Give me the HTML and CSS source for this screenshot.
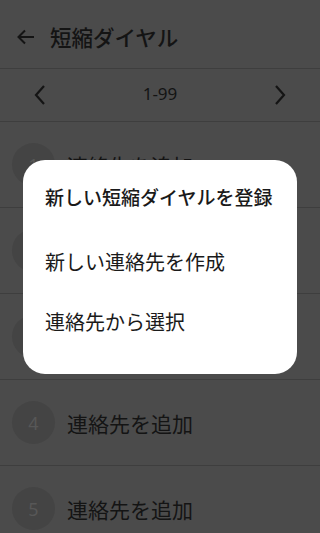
FILE: index.html
```html
<!DOCTYPE html>
<html lang="ja">
<head>
<meta charset="utf-8">
<link rel="stylesheet" href="styles.css">
</head>
<body>
<div class="app">
  <header class="header">
    <svg class="back" width="20" height="20" viewBox="0 0 20 20"><path d="M18 10H3M9 3.5L2.5 10L9 16.5" fill="none" stroke="#141414" stroke-width="2"/></svg>
    <h1 class="title">短縮ダイヤル</h1>
  </header>
  <div class="pager">
    <svg class="chev" width="16" height="24" viewBox="0 0 16 24"><path d="M12 3L4 12L12 21" fill="none" stroke="#141414" stroke-width="2.2"/></svg>
    <span class="range">1-99</span>
    <svg class="chev" width="16" height="24" viewBox="0 0 16 24"><path d="M4 3L12 12L4 21" fill="none" stroke="#141414" stroke-width="2.2"/></svg>
  </div>
  <ul class="list">
    <li class="row"><span class="num">1</span><span class="label">連絡先を追加</span></li>
    <li class="row"><span class="num">2</span><span class="label">連絡先を追加</span></li>
    <li class="row"><span class="num">3</span><span class="label">連絡先を追加</span></li>
    <li class="row"><span class="num">4</span><span class="label">連絡先を追加</span></li>
    <li class="row"><span class="num">5</span><span class="label">連絡先を追加</span></li>
  </ul>
</div>
<div class="overlay">
  <div class="dialog">
    <div class="dtitle">新しい短縮ダイヤルを登録</div>
    <div class="item">新しい連絡先を作成</div>
    <div class="item">連絡先から選択</div>
  </div>
</div>
</body>
</html>
```
FILE: styles.css
```css
html, body {
  margin: 0;
  padding: 0;
  height: 100%;
  overflow: hidden;
}
body {
  background: #4b4b4b;
  font-family: "Noto Sans CJK JP", "Noto Sans", sans-serif;
  color: #141414;
}
.app {
  display: flex;
  flex-direction: column;
}
.header {
  display: flex;
  align-items: center;
  border-bottom: 1px solid #3e3e3e;
  padding-left: 16px;
  padding-top: 6px;
  box-sizing: border-box;
  height: 69px;
}
.back {
  margin-right: 14px;
}
.title {
  margin: 0;
  font-size: 21.5px;
  font-weight: 500;
  line-height: 1;
}
.pager {
  height: 52px;
  display: flex;
  align-items: center;
  justify-content: space-between;
  padding: 0 32px 0 32px;
  border-bottom: 1px solid #3e3e3e;
}
.range {
  font-size: 17px;
  font-family: "Noto Sans", sans-serif;
  margin-bottom: 3px;
}
.list {
  list-style: none;
  margin: 0;
  padding: 0;
}
.row {
  height: 85px;
  display: flex;
  align-items: center;
  border-bottom: 1px solid #3e3e3e;
  padding-left: 12px;
}
.num {
  width: 43px;
  height: 43px;
  border-radius: 50%;
  background: #444444;
  color: #575757;
  display: flex;
  align-items: center;
  justify-content: center;
  font-size: 18px;
  font-family: "Noto Sans", sans-serif;
  margin-right: 12px;
}
.label {
  font-size: 21px;
}
.overlay {
  position: fixed;
  inset: 0;
  display: flex;
  align-items: center;
  justify-content: center;
}
.dialog {
  width: 274px;
  background: #ffffff;
  border-radius: 22px;
  padding: 24px 22px 22px;
  box-sizing: border-box;
  color: #1a1a1a;
}
.dtitle {
  font-size: 19px;
  font-weight: 500;
  line-height: 26px;
  margin-bottom: 22px;
  white-space: nowrap;
}
.item {
  font-size: 20px;
  line-height: 60px;
  height: 60px;
  white-space: nowrap;
}
```
